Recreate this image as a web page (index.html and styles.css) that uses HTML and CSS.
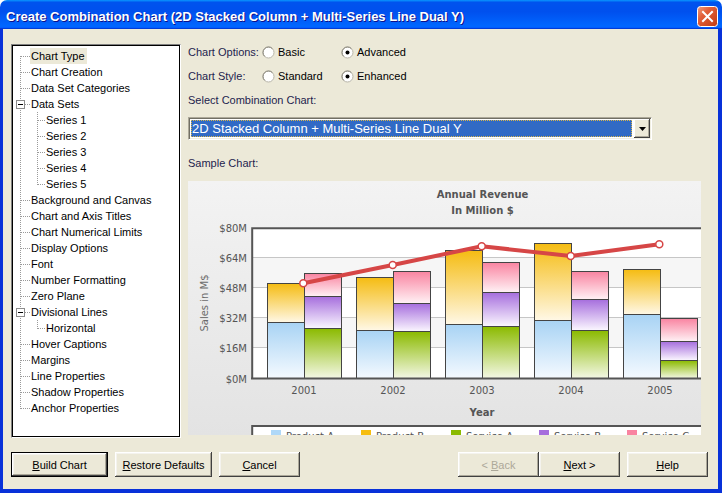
FILE: index.html
```html
<!DOCTYPE html>
<html>
<head>
<meta charset="utf-8">
<title>Create Combination Chart</title>
<link rel="stylesheet" href="styles.css">
</head>
<body>
<div class="window">
  <div class="titlebar">
    <span class="title">Create Combination Chart (2D Stacked Column + Multi-Series Line Dual Y)</span>
    <span class="close">
      <svg width="21" height="21" viewBox="0 0 21 21">
        <defs>
          <linearGradient id="cg" x1="0" y1="0" x2="1" y2="1">
            <stop offset="0" stop-color="#F0A080"/>
            <stop offset="0.35" stop-color="#E2603A"/>
            <stop offset="1" stop-color="#C23A10"/>
          </linearGradient>
        </defs>
        <rect x="0.5" y="0.5" width="20" height="20" rx="3" fill="url(#cg)" stroke="#fff"/>
        <path d="M6 6 L15 15 M15 6 L6 15" stroke="#fff" stroke-width="2" stroke-linecap="square"/>
      </svg>
    </span>
  </div>
  <div class="frame">
    <div class="main">
      <ul class="tree">
        <li class="r first"><span class="t sel">Chart Type</span></li>
        <li class="r"><span class="t">Chart Creation</span></li>
        <li class="r"><span class="t">Data Set Categories</span></li>
        <li class="r box"><i class="mb"></i><span class="t">Data Sets</span></li>
        <li class="r c"><span class="t">Series 1</span></li>
        <li class="r c"><span class="t">Series 2</span></li>
        <li class="r c"><span class="t">Series 3</span></li>
        <li class="r c"><span class="t">Series 4</span></li>
        <li class="r c cl"><span class="t">Series 5</span></li>
        <li class="r"><span class="t">Background and Canvas</span></li>
        <li class="r"><span class="t">Chart and Axis Titles</span></li>
        <li class="r"><span class="t">Chart Numerical Limits</span></li>
        <li class="r"><span class="t">Display Options</span></li>
        <li class="r"><span class="t">Font</span></li>
        <li class="r"><span class="t">Number Formatting</span></li>
        <li class="r"><span class="t">Zero Plane</span></li>
        <li class="r box"><i class="mb"></i><span class="t">Divisional Lines</span></li>
        <li class="r c cl"><span class="t">Horizontal</span></li>
        <li class="r"><span class="t">Hover Captions</span></li>
        <li class="r"><span class="t">Margins</span></li>
        <li class="r"><span class="t">Line Properties</span></li>
        <li class="r"><span class="t">Shadow Properties</span></li>
        <li class="r last"><span class="t">Anchor Properties</span></li>
      </ul>
      <div class="panel">
        <div class="optrow">
          <span class="lbl">Chart Options:</span>
          <span class="opt"><svg class="radio" width="13" height="13" viewBox="0 0 13 13"><circle cx="6.5" cy="6.5" r="5.5" fill="#fff" stroke="#B8B5A8"/><path d="M2.6 10.4 A5.5 5.5 0 0 1 10.4 2.6" fill="none" stroke="#8A877C"/></svg>Basic</span>
          <span class="opt"><svg class="radio" width="13" height="13" viewBox="0 0 13 13"><circle cx="6.5" cy="6.5" r="5.5" fill="#fff" stroke="#B8B5A8"/><path d="M2.6 10.4 A5.5 5.5 0 0 1 10.4 2.6" fill="none" stroke="#8A877C"/><circle cx="6.5" cy="6.5" r="2" fill="#000"/></svg>Advanced</span>
        </div>
        <div class="optrow">
          <span class="lbl">Chart Style:</span>
          <span class="opt"><svg class="radio" width="13" height="13" viewBox="0 0 13 13"><circle cx="6.5" cy="6.5" r="5.5" fill="#fff" stroke="#B8B5A8"/><path d="M2.6 10.4 A5.5 5.5 0 0 1 10.4 2.6" fill="none" stroke="#8A877C"/></svg>Standard</span>
          <span class="opt"><svg class="radio" width="13" height="13" viewBox="0 0 13 13"><circle cx="6.5" cy="6.5" r="5.5" fill="#fff" stroke="#B8B5A8"/><path d="M2.6 10.4 A5.5 5.5 0 0 1 10.4 2.6" fill="none" stroke="#8A877C"/><circle cx="6.5" cy="6.5" r="2" fill="#000"/></svg>Enhanced</span>
        </div>
        <div class="lbl caption">Select Combination Chart:</div>
        <div class="combo">
          <div class="combo-sel">2D Stacked Column + Multi-Series Line Dual Y</div>
          <div class="combo-btn"><svg width="7" height="4" viewBox="0 0 7 4"><path d="M0 0 H7 L3.5 4 Z" fill="#000"/></svg></div>
        </div>
        <div class="lbl caption sample">Sample Chart:</div>
        <svg class="chart" width="513" height="254" viewBox="0 0 513 254">
          <defs>
            <linearGradient id="bg" x1="0" y1="0" x2="0" y2="1"><stop offset="0" stop-color="#F3F3F3"/><stop offset="1" stop-color="#E3E3E3"/></linearGradient>
            <linearGradient id="ga" x1="0" y1="0" x2="0" y2="1"><stop offset="0" stop-color="#A8D3F4"/><stop offset="1" stop-color="#F5FAFF"/></linearGradient>
            <linearGradient id="gb" x1="0" y1="0" x2="0" y2="1"><stop offset="0" stop-color="#F5BC12"/><stop offset="1" stop-color="#FFF8E6"/></linearGradient>
            <linearGradient id="gsa" x1="0" y1="0" x2="0" y2="1"><stop offset="0" stop-color="#8BBA00"/><stop offset="1" stop-color="#F4F8E6"/></linearGradient>
            <linearGradient id="gsb" x1="0" y1="0" x2="0" y2="1"><stop offset="0" stop-color="#A66EDD"/><stop offset="1" stop-color="#FBF7FF"/></linearGradient>
            <linearGradient id="gsc" x1="0" y1="0" x2="0" y2="1"><stop offset="0" stop-color="#F984A1"/><stop offset="1" stop-color="#FFF2F5"/></linearGradient>
          </defs>
          <rect width="513" height="254" fill="url(#bg)"/>
          <text class="ctitle" x="294.5" y="17">Annual Revenue</text>
          <text class="ctitle" x="294.5" y="33">In Million $</text>

          <rect x="65" y="47" width="530" height="151" fill="#fff"/>
          <rect x="65" y="76.5" width="530" height="30" fill="#F6F6F6"/>
          <rect x="65" y="136.5" width="530" height="30" fill="#F6F6F6"/>
          <g stroke="#C6C6C6" stroke-width="1">
            <line x1="65" x2="595" y1="76.5" y2="76.5"/>
            <line x1="65" x2="595" y1="106.5" y2="106.5"/>
            <line x1="65" x2="595" y1="136.5" y2="136.5"/>
            <line x1="65" x2="595" y1="166.5" y2="166.5"/>
          </g>

          <g stroke="#444" stroke-width="1">
            <rect x="79.5" y="141.5" width="37" height="56" fill="url(#ga)"/>
            <rect x="79.5" y="102.5" width="37" height="39" fill="url(#gb)"/>
            <rect x="116.5" y="147.5" width="37" height="50" fill="url(#gsa)"/>
            <rect x="116.5" y="115.5" width="37" height="32" fill="url(#gsb)"/>
            <rect x="116.5" y="92.5" width="37" height="23" fill="url(#gsc)"/>

            <rect x="168.5" y="149.5" width="37" height="48" fill="url(#ga)"/>
            <rect x="168.5" y="96.5" width="37" height="53" fill="url(#gb)"/>
            <rect x="205.5" y="150.5" width="37" height="47" fill="url(#gsa)"/>
            <rect x="205.5" y="122.5" width="37" height="28" fill="url(#gsb)"/>
            <rect x="205.5" y="90.5" width="37" height="32" fill="url(#gsc)"/>

            <rect x="257.5" y="143.5" width="37" height="54" fill="url(#ga)"/>
            <rect x="257.5" y="69.5" width="37" height="74" fill="url(#gb)"/>
            <rect x="294.5" y="145.5" width="37" height="52" fill="url(#gsa)"/>
            <rect x="294.5" y="111.5" width="37" height="34" fill="url(#gsb)"/>
            <rect x="294.5" y="81.5" width="37" height="30" fill="url(#gsc)"/>

            <rect x="346.5" y="139.5" width="37" height="58" fill="url(#ga)"/>
            <rect x="346.5" y="62.5" width="37" height="77" fill="url(#gb)"/>
            <rect x="383.5" y="149.5" width="37" height="48" fill="url(#gsa)"/>
            <rect x="383.5" y="118.5" width="37" height="31" fill="url(#gsb)"/>
            <rect x="383.5" y="90.5" width="37" height="28" fill="url(#gsc)"/>

            <rect x="435.5" y="133.5" width="37" height="64" fill="url(#ga)"/>
            <rect x="435.5" y="88.5" width="37" height="45" fill="url(#gb)"/>
            <rect x="472.5" y="179.5" width="37" height="18" fill="url(#gsa)"/>
            <rect x="472.5" y="160.5" width="37" height="19" fill="url(#gsb)"/>
            <rect x="472.5" y="137.5" width="37" height="23" fill="url(#gsc)"/>
          </g>

          <polyline points="115.3,102.3 204.7,84 293.7,65.3 382.7,75 471.3,63.3" fill="none" stroke="#D64646" stroke-width="4" stroke-linejoin="round"/>
          <g fill="#fff" stroke="#D64646" stroke-width="1.5">
            <circle cx="115.3" cy="102.3" r="3.5"/>
            <circle cx="204.7" cy="84" r="3.5"/>
            <circle cx="293.7" cy="65.3" r="3.5"/>
            <circle cx="382.7" cy="75" r="3.5"/>
            <circle cx="471.3" cy="63.3" r="3.5"/>
          </g>

          <path d="M64.2 198 V47.2 H600" fill="none" stroke="#555" stroke-width="2"/>
          <line x1="63" y1="197.5" x2="600" y2="197.5" stroke="#555" stroke-width="2"/>

          <g class="clbl" text-anchor="end">
            <text x="59" y="51">$80M</text>
            <text x="59" y="81">$64M</text>
            <text x="59" y="111">$48M</text>
            <text x="59" y="141">$32M</text>
            <text x="59" y="171">$16M</text>
            <text x="59" y="201.5">$0M</text>
          </g>
          <g class="clbl" text-anchor="middle">
            <text x="116" y="212.5">2001</text>
            <text x="205" y="212.5">2002</text>
            <text x="294" y="212.5">2003</text>
            <text x="383" y="212.5">2004</text>
            <text x="472" y="212.5">2005</text>
          </g>
          <text class="ctitle" x="294" y="234.5">Year</text>
          <text class="axname" transform="translate(20,122) rotate(-90)" text-anchor="middle">Sales in M$</text>

          <rect x="64.2" y="245" width="540" height="30" fill="#fff" stroke="#555" stroke-width="2"/>
          <rect x="83" y="249" width="10" height="10" fill="#AFD8F8"/>
          <rect x="173" y="249" width="10" height="10" fill="#F6BD0F"/>
          <rect x="263" y="249" width="10" height="10" fill="#8BBA00"/>
          <rect x="351" y="249" width="10" height="10" fill="#A66EDD"/>
          <rect x="439" y="249" width="10" height="10" fill="#F984A1"/>
          <g class="clbl">
            <text x="98" y="258.5">Product A</text>
            <text x="188" y="258.5">Product B</text>
            <text x="278" y="258.5">Service A</text>
            <text x="366" y="258.5">Service B</text>
            <text x="454" y="258.5">Service C</text>
          </g>
        </svg>
      </div>
    </div>
    <div class="buttons">
      <button class="btn wide def"><span><u>B</u>uild Chart</span></button>
      <button class="btn wide"><span><u>R</u>estore Defaults</span></button>
      <button class="btn"><span><u>C</u>ancel</span></button>
      <span class="spacer"></span>
      <button class="btn dis"><span>&lt; <u>B</u>ack</span></button>
      <button class="btn"><span><u>N</u>ext &gt;</span></button>
      <button class="btn help"><span><u>H</u>elp</span></button>
    </div>
  </div>
</div>
</body>
</html>
```

FILE: styles.css
```css
* { box-sizing: border-box; }
html, body { margin: 0; padding: 0; }
body {
  width: 722px;
  height: 493px;
  overflow: hidden;
  background: #fff;
  font-family: "Liberation Sans", Arial, sans-serif;
  font-size: 11px;
  color: #000;
}
.window {
  width: 722px;
  height: 493px;
  display: flex;
  flex-direction: column;
}
.titlebar {
  flex: none;
  height: 29px;
  display: flex;
  align-items: center;
  justify-content: space-between;
  padding: 3px 4px 0 6px;
  border-radius: 7px 7px 0 0;
  background: linear-gradient(180deg, #0997ff, #0053ee 8%, #0050ee 40%, #0066ff 88%, #0066ff 93%, #005bff 95%, #003dd7 96%, #003dd7);
}
.title {
  color: #fff;
  font-weight: bold;
  font-size: 13px;
  text-shadow: 1px 1px #0F1089;
  white-space: nowrap;
}
.close { display: flex; width: 21px; height: 21px; }
.frame {
  flex: 1;
  display: flex;
  flex-direction: column;
  background: #ECE9D8;
  border-style: solid;
  border-color: #0831D9;
  border-width: 0 4px 4px 3px;
  padding: 15px 10px 0 8px;
}
.main { display: flex; height: 394px; }
.tree {
  list-style: none;
  margin: 0;
  padding: 3px 0 0 1px;
  width: 170px;
  height: 394px;
  background: #fff;
  border: 1px solid;
  border-color: #808080 #fff #fff #808080;
  box-shadow: inset 0 0 0 1px #000;
}
.r {
  height: 16px;
  display: flex;
  align-items: center;
  padding-left: 17px;
  white-space: nowrap;
  background:
    repeating-linear-gradient(to right, #9A9A9A 0 1px, transparent 1px 2px) 8px 8px / 9px 1px no-repeat,
    repeating-linear-gradient(to bottom, #9A9A9A 0 1px, transparent 1px 2px) 7px 0 / 1px 16px no-repeat;
}
.r.first {
  background:
    repeating-linear-gradient(to right, #9A9A9A 0 1px, transparent 1px 2px) 8px 8px / 9px 1px no-repeat,
    repeating-linear-gradient(to bottom, #9A9A9A 0 1px, transparent 1px 2px) 7px 8px / 1px 8px no-repeat;
}
.r.last {
  background:
    repeating-linear-gradient(to right, #9A9A9A 0 1px, transparent 1px 2px) 8px 8px / 9px 1px no-repeat,
    repeating-linear-gradient(to bottom, #9A9A9A 0 1px, transparent 1px 2px) 7px 0 / 1px 9px no-repeat;
}
.r.box { padding-left: 3px; }
.mb {
  flex: none;
  width: 9px;
  height: 9px;
  margin-right: 5px;
  border: 1px solid #8C8C8C;
  background: #fff linear-gradient(#000, #000) center / 5px 1px no-repeat;
}
.r.c {
  padding-left: 32px;
  background:
    repeating-linear-gradient(to right, #9A9A9A 0 1px, transparent 1px 2px) 25px 8px / 7px 1px no-repeat,
    repeating-linear-gradient(to bottom, #9A9A9A 0 1px, transparent 1px 2px) 24px 0 / 1px 16px no-repeat,
    repeating-linear-gradient(to bottom, #9A9A9A 0 1px, transparent 1px 2px) 7px 0 / 1px 16px no-repeat;
}
.r.c.cl {
  background:
    repeating-linear-gradient(to right, #9A9A9A 0 1px, transparent 1px 2px) 25px 8px / 7px 1px no-repeat,
    repeating-linear-gradient(to bottom, #9A9A9A 0 1px, transparent 1px 2px) 24px 0 / 1px 9px no-repeat,
    repeating-linear-gradient(to bottom, #9A9A9A 0 1px, transparent 1px 2px) 7px 0 / 1px 16px no-repeat;
}
.t { padding: 0 2px 0 1px; line-height: 16px; }
.t.sel { background: #ECE9D8; }

.panel {
  margin-left: 7px;
  width: 513px;
  display: flex;
  flex-direction: column;
}
.lbl { color: #1E1E4E; }
.optrow {
  display: flex;
  align-items: center;
  height: 16px;
  margin-bottom: 8px;
}
.optrow .lbl { width: 74px; }
.opt {
  display: flex;
  align-items: center;
  width: 79px;
}
.radio { flex: none; margin-right: 3px; margin-top: 1px; }
.caption { height: 16px; line-height: 16px; }
.combo {
  margin-top: 9px;
  width: 464px;
  height: 23px;
  display: flex;
  background: #fff;
  border: 1px solid;
  border-color: #ACA899 #fff #fff #ACA899;
  box-shadow: inset 1px 1px 0 #716F64, inset -1px -1px 0 #F1EFE2;
  padding: 1px;
}
.combo-sel {
  flex: 1;
  margin: 1px 2px 1px 1px;
  background: #316AC5;
  color: #fff;
  font-size: 13px;
  line-height: 15px;
  padding-left: 0;
  border: 1px dotted #D9B44A;
  white-space: nowrap;
  overflow: hidden;
}
.combo-btn {
  width: 16px;
  height: 19px;
  display: flex;
  align-items: center;
  justify-content: center;
  background: #ECE9D8;
  box-shadow: inset -1px -1px 0 #404040, inset 1px 1px 0 #fff, inset -2px -2px 0 #ACA899;
}
.sample { margin-top: 15px; margin-bottom: 10px; }
.chart { display: block; overflow: hidden; }
.ctitle {
  font-family: "DejaVu Sans", Verdana, sans-serif;
  font-size: 10px;
  font-weight: bold;
  fill: #555;
  text-anchor: middle;
}
.clbl text, .axname {
  font-family: "DejaVu Sans", Verdana, sans-serif;
  font-size: 10px;
  fill: #555;
}
.axname { fill: #6A6A6A; }

.buttons {
  display: flex;
  margin-top: 14px;
  height: 25px;
}
.btn {
  flex: none;
  width: 81px;
  height: 25px;
  margin: 0 7px 0 0;
  padding: 0;
  border: none;
  background: #ECE9D8;
  font-family: "Liberation Sans", Arial, sans-serif;
  font-size: 11px;
  color: #000;
  display: flex;
  align-items: center;
  justify-content: center;
  box-shadow: inset -1px -1px 0 #404040, inset 1px 1px 0 #fff, inset -2px -2px 0 #ACA899, inset 2px 2px 0 #F4F3EE;
}
.btn.wide { width: 97px; }
.btn.def {
  border: 1px solid #000;
}
.btn.dis { color: #ACA899; margin-right: 0; }
.btn.help { margin-right: 0; }
.spacer { flex: 1; }
```
